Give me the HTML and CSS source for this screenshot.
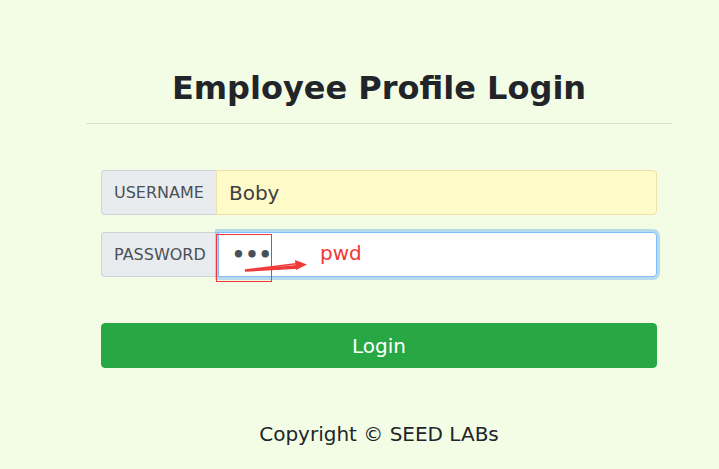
FILE: index.html
```html
<!DOCTYPE html>
<html>
<head>
<meta charset="utf-8">
<link rel="stylesheet" href="styles.css">
</head>
<body>
<div class="container">
  <h2 class="title">Employee Profile Login</h2>
  <hr class="rule">
  <form class="form">
    <div class="group">
      <span class="label">USERNAME</span>
      <input class="field field-fill" type="text" value="Boby">
    </div>
    <div class="group group-pwd">
      <span class="label">PASSWORD</span>
      <input class="field field-focus" type="password" value="abc">
      <svg class="annot" width="220" height="52" viewBox="0 0 220 52">
        <rect x="115.5" y="2.5" width="55" height="47" fill="none" stroke="#f03a3a" stroke-width="1"/>
        <path d="M144 39 L197 33.5 L197 36 Z M144 38 L197 31.5" stroke="#f03a3a" stroke-width="1.5" fill="#f03a3a"/>
        <polygon points="194,28 206,32.5 195,38" fill="#f03a3a"/>
      </svg>
      <span class="pwd">pwd</span>
    </div>
    <button class="btn" type="button">Login</button>
  </form>
  <p class="copy">Copyright © SEED LABs</p>
</div>
</body>
</html>
```

FILE: styles.css
```css
html, body {
  margin: 0;
  padding: 0;
  background: #f3fde6;
}
body {
  font-family: "DejaVu Sans", sans-serif;
  color: #212529;
}
.container {
  margin-left: 86px;
  width: 586px;
}
.title {
  margin: 0;
  padding-top: 69px;
  font-size: 32px;
  font-weight: bold;
  line-height: 38px;
  text-align: center;
  color: #212529;
}
.rule {
  margin: 16px 0 46px 0;
  border: 0;
  border-top: 1px solid #dadfd2;
  height: 0;
}
.form {
  padding: 0 15px;
  margin: 0;
}
.group {
  display: flex;
  height: 45px;
  margin-bottom: 17px;
  position: relative;
}
.label {
  display: flex;
  align-items: center;
  box-sizing: border-box;
  height: 45px;
  padding: 0 12px;
  font-size: 16px;
  color: #495057;
  background: #e9ecef;
  border: 1px solid #ced4da;
  border-right: 0;
  border-radius: 4px 0 0 4px;
}
.field {
  flex: 1;
  box-sizing: border-box;
  height: 45px;
  margin: 0;
  padding: 0 12px;
  font-family: "DejaVu Sans", sans-serif;
  font-size: 20px;
  color: #495057;
  border: 1px solid #ced4da;
  border-radius: 0 4px 4px 0;
  outline: none;
  position: relative;
  z-index: 1;
}
.field-fill {
  background: #fefbc9;
  border-color: #efe0ab;
  color: #3d3f42;
}
.field-focus {
  background: #ffffff;
  border-color: #80bdff;
  box-shadow: 0 0 0 3px rgba(0, 123, 255, 0.25);
  font-weight: bold;
  font-size: 21px;
  padding-left: 13px;
}
.annot {
  position: absolute;
  left: 0;
  top: 0;
  z-index: 2;
  overflow: visible;
}
.pwd {
  position: absolute;
  left: 219px;
  top: 11px;
  font-size: 20px;
  line-height: 20px;
  color: #f03a3a;
  z-index: 3;
}
.btn {
  display: block;
  width: 100%;
  height: 45px;
  margin-top: 46px;
  padding: 0;
  font-family: "DejaVu Sans", sans-serif;
  font-size: 20px;
  color: #ffffff;
  background: #28a745;
  border: 1px solid #28a745;
  border-radius: 4px;
}
.copy {
  margin: 54px 0 0 0;
  font-size: 20px;
  text-align: center;
  color: #212529;
}
```
